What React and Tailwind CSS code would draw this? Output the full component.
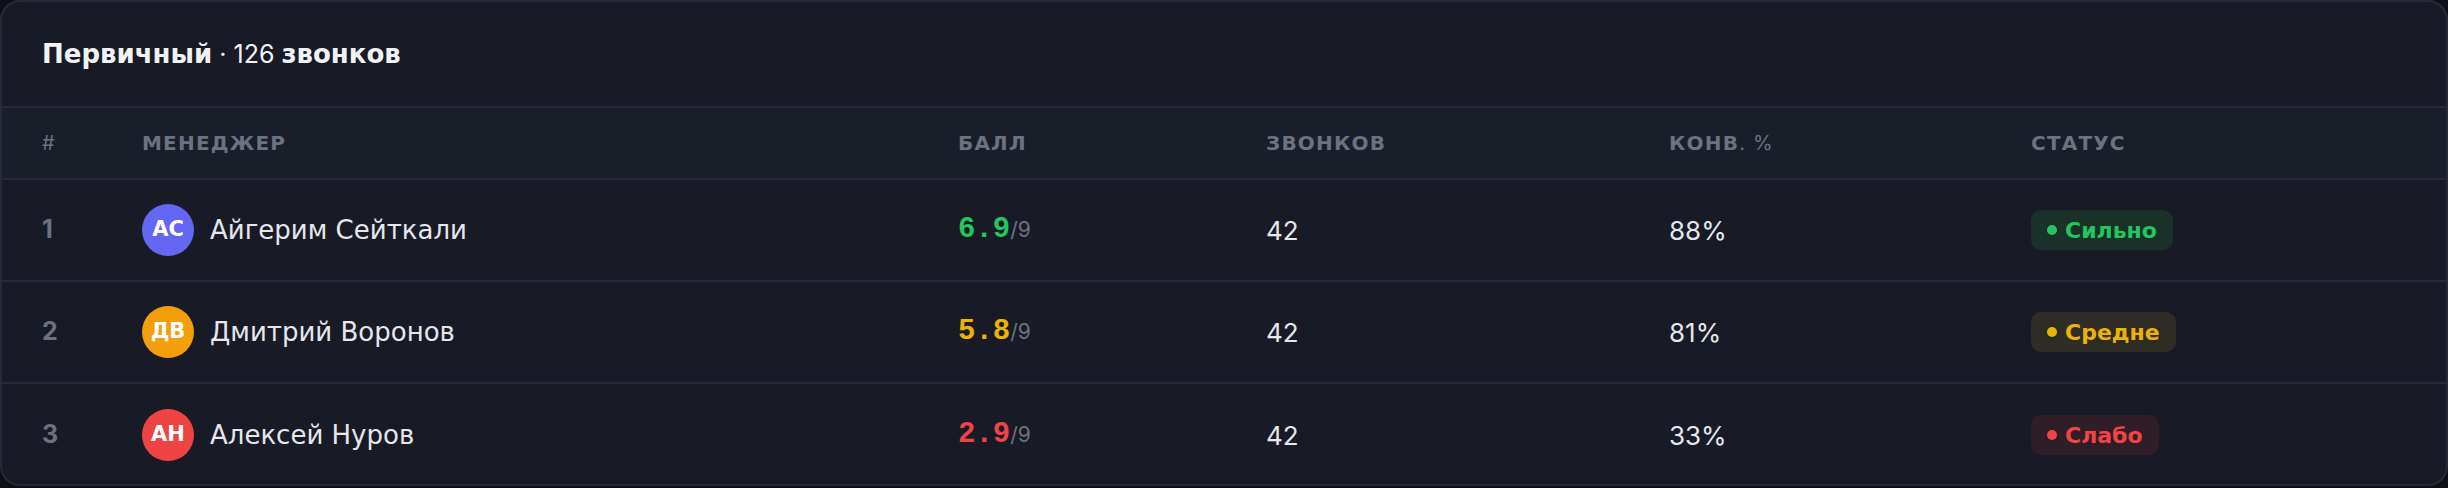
import React from "react";

const managers = [
  { id: 1, initials: "АС", name: "Айгерим Сейткали", avatar: "bg-[#6366f1]", score: "6.9", scoreColor: "text-[#22c55e]", calls: 42, conv: "88%", status: "Сильно", badge: "bg-[#1a3129] text-[#22c55e]", dot: "bg-[#22c55e]" },
  { id: 2, initials: "ДВ", name: "Дмитрий Воронов", avatar: "bg-[#f59e0b]", score: "5.8", scoreColor: "text-[#eab308]", calls: 42, conv: "81%", status: "Средне", badge: "bg-[#2e2c24] text-[#eab308]", dot: "bg-[#eab308]" },
  { id: 3, initials: "АН", name: "Алексей Нуров", avatar: "bg-[#ef4444]", score: "2.9", scoreColor: "text-[#ef4444]", calls: 42, conv: "33%", status: "Слабо", badge: "bg-[#2f1e28] text-[#ef4444]", dot: "bg-[#ef4444]" },
];

const cols = "grid grid-cols-[100px_816px_308px_403px_362px_1fr] items-center px-[40px]";
// digits & punctuation come from Inter, cyrillic from DejaVu
const num = "font-['Inter',sans-serif] font-normal";

const App = () => {
  return (
    <div className="w-full h-[488px] bg-[#0e1016] font-['DejaVu_Sans',sans-serif]">
      <div className="h-[486px] rounded-[20px] border-2 border-[#262a36] bg-[#181b26] overflow-hidden">
        {/* title */}
        <div className="h-[106px] flex items-center px-[40px] border-b-2 border-[#262a36]">
          <p className="text-[26px] font-bold text-[#f1f2f6]">
            Первичный<span className={`${num} text-[25px]`}> · 126 </span>звонков
          </p>
        </div>

        {/* header */}
        <div className={`${cols} h-[72px] bg-[#1a1e29] border-b-2 border-[#262a36] text-[20px] font-bold tracking-[0.06em] text-[#6b7280] uppercase`}>
          <span className={num}>#</span>
          <span>Менеджер</span>
          <span>Балл</span>
          <span>Звонков</span>
          <span>
            Конв<span className={num}>. %</span>
          </span>
          <span>Статус</span>
        </div>

        {managers.map((m, index) => (
          <div
            key={m.id}
            className={`${cols} h-[102px] ${index < managers.length - 1 ? "border-b-2 border-[#262a36]" : ""}`}
          >
            <span className="font-['Inter',sans-serif] text-[25px] font-bold text-[#6b7280]">{m.id}</span>
            <div className="flex items-center gap-4">
              <div className={`w-[52px] h-[52px] rounded-full flex items-center justify-center text-[21px] font-bold text-white ${m.avatar}`}>
                {m.initials}
              </div>
              <span className="text-[26px] text-[#e5e7eb]">{m.name}</span>
            </div>
            <div className="flex items-baseline">
              <span className={`font-['Liberation_Mono',monospace] font-bold text-[29px] ${m.scoreColor}`}>{m.score}</span>
              <span className={`${num} text-[21px] text-[#6b7280]`}>/9</span>
            </div>
            <span className={`${num} text-[26px] text-[#e5e7eb]`}>{m.calls}</span>
            <span className={`${num} text-[26px] text-[#e5e7eb]`}>{m.conv}</span>
            <div>
              <span className={`inline-flex items-center gap-2 h-[40px] px-4 rounded-[10px] text-[22px] font-bold ${m.badge}`}>
                <span className={`w-[10px] h-[10px] rounded-full ${m.dot}`}></span>
                {m.status}
              </span>
            </div>
          </div>
        ))}
      </div>
    </div>
  );
};

export default App;
